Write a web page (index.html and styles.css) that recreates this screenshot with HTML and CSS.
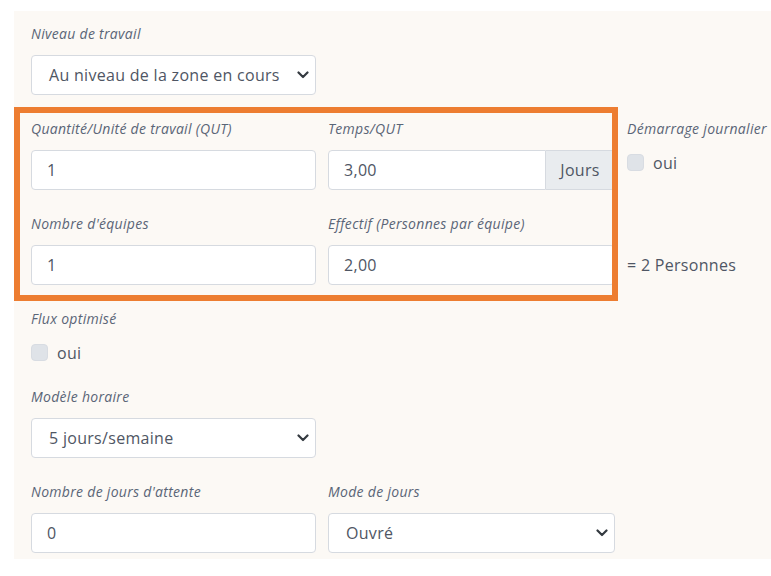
FILE: index.html
```html
<!DOCTYPE html>
<html lang="fr">
<head>
<meta charset="utf-8">
<title>Niveau de travail</title>
<link rel="stylesheet" href="styles.css">
</head>
<body>
<div class="panel">
  <div class="form">
    <div class="field c1">
      <div class="label">Niveau de travail</div>
      <div class="select"><span>Au niveau de la zone en cours</span><svg class="chev" width="12" height="8" viewBox="0 0 12 8"><path d="M1.5 1.5 L6 6 L10.5 1.5" fill="none" stroke="#343a40" stroke-width="2.2" stroke-linecap="round" stroke-linejoin="round"/></svg></div>
    </div>

    <div class="field c1">
      <div class="label">Quantité/Unité de travail (QUT)</div>
      <div class="input">1</div>
    </div>
    <div class="field c2">
      <div class="label">Temps/QUT</div>
      <div class="group"><div class="input grouped">3,00</div><div class="addon">Jours</div></div>
    </div>
    <div class="field c3">
      <div class="label">Démarrage journalier</div>
      <div class="check"><span class="box"></span><span>oui</span></div>
    </div>

    <div class="field c1">
      <div class="label">Nombre d'équipes</div>
      <div class="input">1</div>
    </div>
    <div class="field c2">
      <div class="label">Effectif (Personnes par équipe)</div>
      <div class="input">2,00</div>
    </div>
    <div class="field c3 result">= 2 Personnes</div>

    <div class="field c1">
      <div class="label">Flux optimisé</div>
      <div class="check"><span class="box"></span><span>oui</span></div>
    </div>

    <div class="field c1">
      <div class="label">Modèle horaire</div>
      <div class="select"><span>5 jours/semaine</span><svg class="chev" width="12" height="8" viewBox="0 0 12 8"><path d="M1.5 1.5 L6 6 L10.5 1.5" fill="none" stroke="#343a40" stroke-width="2.2" stroke-linecap="round" stroke-linejoin="round"/></svg></div>
    </div>

    <div class="field c1">
      <div class="label">Nombre de jours d'attente</div>
      <div class="input">0</div>
    </div>
    <div class="field c2">
      <div class="label">Mode de jours</div>
      <div class="select"><span>Ouvré</span><svg class="chev" width="12" height="8" viewBox="0 0 12 8"><path d="M1.5 1.5 L6 6 L10.5 1.5" fill="none" stroke="#343a40" stroke-width="2.2" stroke-linecap="round" stroke-linejoin="round"/></svg></div>
    </div>
  </div>
  <div class="highlight"></div>
</div>
</body>
</html>
```

FILE: styles.css
```css
html, body {
  margin: 0;
  padding: 0;
  background: #ffffff;
}
body {
  font-family: "Open Sans", "Lato", sans-serif;
  color: #4f5664;
}
.panel {
  position: relative;
  margin: 11px 0 0 14px;
  height: 548px;
  background: #fcf9f5;
  box-sizing: border-box;
  padding: 13px 0 0 17px;
}
.form {
  display: grid;
  grid-template-columns: 285px 287px auto;
  column-gap: 12px;
  row-gap: 24px;
}
.c1 { grid-column: 1; }
.c2 { grid-column: 2; }
.c3 { grid-column: 3; }
.field {
  display: flex;
  flex-direction: column;
}
.label {
  font-style: italic;
  font-size: 14px;
  letter-spacing: 0.3px;
  line-height: 20px;
  color: #5a6577;
  margin-bottom: 11px;
  white-space: nowrap;
}
.input, .select, .addon, .check, .result {
  font-size: 16px;
  letter-spacing: 0.3px;
  color: #4f5664;
}
.input, .select {
  height: 40px;
  box-sizing: border-box;
  border: 1px solid #d6dae0;
  border-radius: 4px;
  background: #ffffff;
  display: flex;
  align-items: center;
  padding: 0 14px 0 15px;
}
.select {
  padding: 0 6px 0 17px;
  justify-content: space-between;
}
.select span {
  white-space: nowrap;
}
.chev {
  flex: none;
}
.group {
  display: flex;
  height: 40px;
}
.input.grouped {
  flex: 1;
  border-radius: 4px 0 0 4px;
}
.addon {
  width: 69px;
  box-sizing: border-box;
  border: 1px solid #d6dae0;
  border-left: none;
  border-radius: 0 4px 4px 0;
  background: #e9ecef;
  display: flex;
  align-items: center;
  justify-content: center;
}
.check {
  display: flex;
  align-items: center;
  height: 23px;
  box-sizing: border-box;
  padding-top: 2px;
}
.box {
  width: 17px;
  height: 17px;
  box-sizing: border-box;
  border-radius: 4px;
  background: #dfe3e8;
  border: 1px solid #d8dce2;
  margin-right: 9px;
}
.result {
  align-self: end;
  height: 40px;
  flex-direction: row;
  align-items: center;
  white-space: nowrap;
}
.highlight {
  position: absolute;
  left: 0;
  top: 96px;
  width: 604px;
  height: 194px;
  box-sizing: border-box;
  border: 6px solid #ed7d31;
  pointer-events: none;
}
```
